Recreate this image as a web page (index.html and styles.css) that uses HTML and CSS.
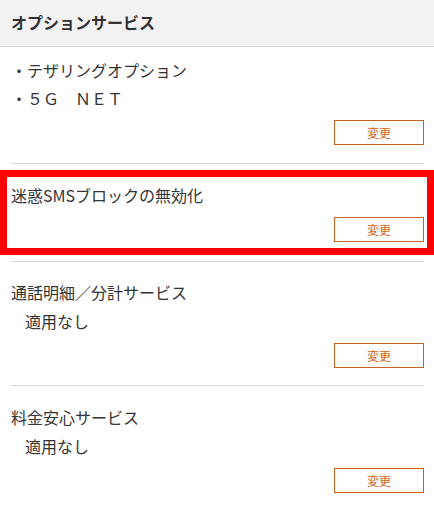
FILE: index.html
```html
<!DOCTYPE html>
<html lang="ja">
<head>
  <meta charset="UTF-8">
  <meta name="viewport" content="width=device-width, initial-scale=1.0">
  <title>オプションサービス</title>
  <link rel="stylesheet" href="styles.css">
</head>
<body>

  <div class="header">オプションサービス</div>

  <div class="section first">
    <p class="line">・テザリングオプション</p>
    <p class="line">・５Ｇ　ＮＥＴ</p>
    <div class="actions"><button class="change-btn">変更</button></div>
  </div>

  <div class="highlight">
    <p class="line">迷惑SMSブロックの無効化</p>
    <div class="actions"><button class="change-btn">変更</button></div>
  </div>

  <div class="section bordered">
    <p class="line">通話明細／分計サービス</p>
    <p class="line sub">適用なし</p>
    <div class="actions"><button class="change-btn">変更</button></div>
  </div>

  <div class="section last">
    <p class="line">料金安心サービス</p>
    <p class="line sub">適用なし</p>
    <div class="actions"><button class="change-btn">変更</button></div>
  </div>

</body>
</html>
```

FILE: styles.css
```css
body {
  margin: 0;
  font-family: "Noto Sans CJK JP", "Liberation Sans", sans-serif;
  font-size: 16px;
  color: #333;
  background-color: #fff;
}
.header {
  height: 46px;
  line-height: 44px;
  padding: 0 11px;
  font-weight: bold;
  background-color: #f2f2f2;
  border-bottom: 1px solid #d8d8d8;
}
.section {
  margin: 0 10px 0 11px;
  padding: 9px 0 18px;
}
.section.first {
  border-bottom: 1px solid #d6d6d6;
}
.section.bordered {
  padding-top: 16px;
  padding-bottom: 17px;
  border-top: 1px solid #d6d6d6;
  border-bottom: 1px solid #d6d6d6;
}
.section.last {
  padding-top: 17px;
}
.line {
  margin: 0;
  line-height: 28px;
}
.sub {
  margin-top: 1px;
  padding-left: 14px;
}
.actions {
  display: flex;
  justify-content: flex-end;
  margin-top: 8px;
}
.section.bordered .actions {
  margin-top: 8px;
}
.change-btn {
  width: 90px;
  height: 25px;
  padding: 0;
  font-family: inherit;
  font-size: 12px;
  color: #d2641a;
  background-color: #fff;
  border: 1px solid #c4621e;
  cursor: pointer;
}
.highlight {
  margin: 6px 0;
  padding: 4px 3px 6px 4px;
  border: 7px solid #ff0000;
}
```
